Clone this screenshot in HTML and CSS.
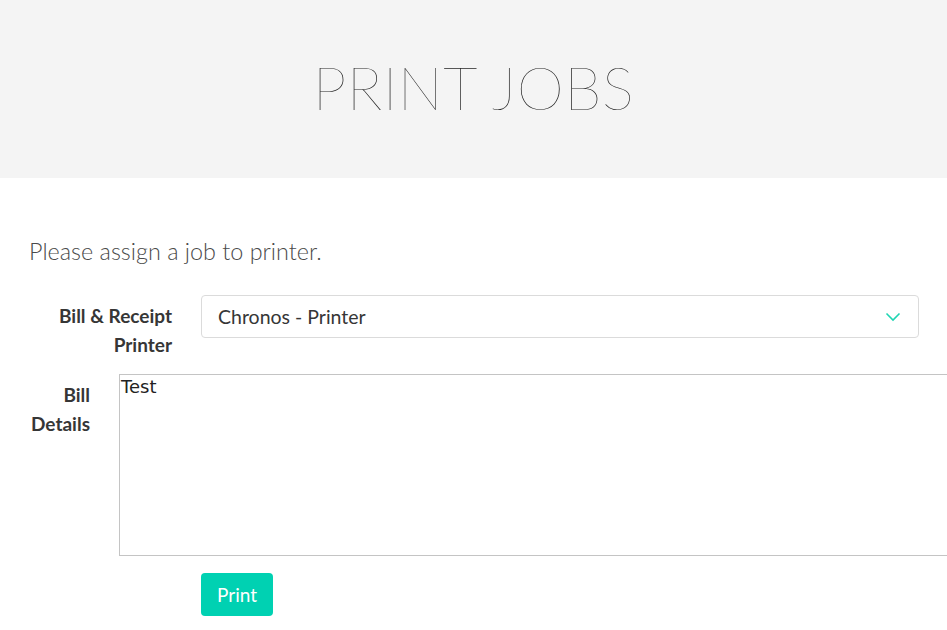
FILE: index.html
```html
<!DOCTYPE html>
<html>
<head>
<meta charset="utf-8">
<link rel="stylesheet" href="styles.css">
</head>
<body>
<header class="hero">
  <h1 class="hero-title">PRINT JOBS</h1>
</header>
<main class="content">
  <p class="intro">Please assign a job to printer.</p>
  <div class="row row-select">
    <label class="label label-wide">Bill &amp; Receipt Printer</label>
    <div class="select">
      <span class="select-value">Chronos - Printer</span>
      <svg class="chevron" width="16" height="10" viewBox="0 0 16 10"><path d="M1.5 1.5 L8 8 L14.5 1.5" fill="none" stroke="#1fd5b3" stroke-width="1.6"/></svg>
    </div>
  </div>
  <div class="row row-text">
    <label class="label label-narrow">Bill Details</label>
    <textarea class="textarea">Test</textarea>
  </div>
  <div class="row row-button">
    <button class="button">Print</button>
  </div>
</main>
</body>
</html>
```
FILE: styles.css
```css
html, body {
  margin: 0;
  padding: 0;
  overflow: hidden;
  background: #ffffff;
}
body {
  font-family: Lato, "Open Sans", sans-serif;
  color: #4a4a4a;
}
.hero {
  height: 178px;
  background: #f4f4f4;
  display: flex;
  align-items: center;
  justify-content: center;
}
.hero-title {
  margin: 0 0 4px 0;
  font-weight: 100;
  font-size: 60px;
  letter-spacing: 0.5px;
  color: #1e1e1e;
}
.content {
  padding: 59px 0 0 29px;
}
.intro {
  margin: 0 0 30px 0;
  font-size: 23.4px;
  font-weight: 300;
  color: #4a4a4a;
}
.row {
  display: flex;
  align-items: flex-start;
}
.label {
  flex-shrink: 0;
  font-weight: 700;
  font-size: 19px;
  line-height: 28.5px;
  color: #363636;
  text-align: right;
}
.label-wide {
  width: 143px;
  margin-right: 29px;
  margin-top: 7px;
}
.select {
  flex: 1;
  margin-right: 28px;
  height: 43px;
  box-sizing: border-box;
  border: 1px solid #dbdbdb;
  border-radius: 4px;
  display: flex;
  align-items: center;
  justify-content: space-between;
  padding: 0 17px 0 16px;
  font-size: 19.5px;
  color: #363636;
}
.chevron {
  display: block;
}
.row-text {
  margin-top: 15px;
}
.label-narrow {
  width: 61px;
  margin-right: 29px;
  margin-top: 7px;
}
.textarea {
  flex-shrink: 0;
  width: 860px;
  height: 182px;
  box-sizing: border-box;
  border: 1px solid #c4c4c4;
  margin: 0;
  padding: 1px 1px;
  font-family: "DejaVu Sans", sans-serif;
  font-size: 18px;
  color: #222;
  resize: none;
}
.row-button {
  margin-top: 17px;
  padding-left: 172px;
}
.button {
  background: #00d1b2;
  color: #ffffff;
  border: none;
  border-radius: 4px;
  height: 43px;
  padding: 0 16px;
  font-family: Lato, sans-serif;
  font-size: 19px;
}
```
